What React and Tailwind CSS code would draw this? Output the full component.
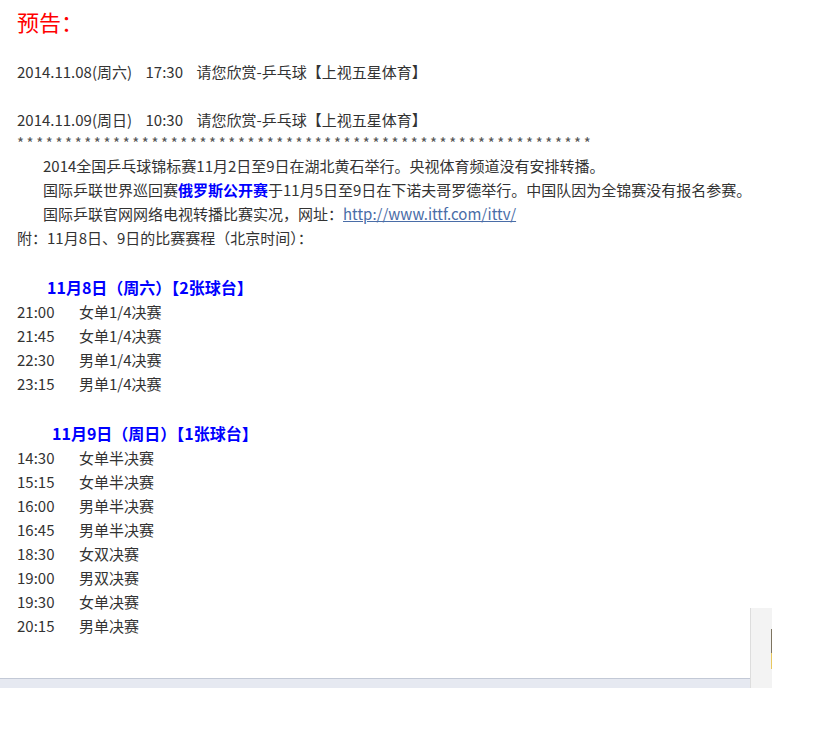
export default function App() {
  const day1 = [
    ["21:00", "女单1/4决赛"],
    ["21:45", "女单1/4决赛"],
    ["22:30", "男单1/4决赛"],
    ["23:15", "男单1/4决赛"],
  ];
  const day2 = [
    ["14:30", "女单半决赛"],
    ["15:15", "女单半决赛"],
    ["16:00", "男单半决赛"],
    ["16:45", "男单半决赛"],
    ["18:30", "女双决赛"],
    ["19:00", "男双决赛"],
    ["19:30", "女单决赛"],
    ["20:15", "男单决赛"],
  ];
  const font = { fontFamily: '"Noto Sans CJK SC", sans-serif' };
  return (
    <div className="relative w-[820px] h-[751px] bg-white overflow-hidden text-[15px] leading-[24px] text-[#333]" style={font}>
      <div className="w-[756px] pl-[17px] pt-[6px]">
        <div className="text-[22px] leading-[30px] text-[#ff0000]">预告：</div>
        <div className="h-[24px]" />
        <div className="whitespace-pre">2014.11.08(周六)    17:30    请您欣赏-乒乓球【上视五星体育】</div>
        <div className="h-[24px]" />
        <div className="whitespace-pre">2014.11.09(周日)    10:30    请您欣赏-乒乓球【上视五星体育】</div>
        <div className="leading-[22px] text-[#555] tracking-[2.6px] whitespace-pre">{"*".repeat(60)}</div>
        <p className="indent-[26px]">2014全国乒乓球锦标赛11月2日至9日在湖北黄石举行。央视体育频道没有安排转播。</p>
        <p className="indent-[26px]">国际乒联世界巡回赛<b className="text-[#0000ff]">俄罗斯公开赛</b>于11月5日至9日在下诺夫哥罗德举行。中国队因为全锦赛没有报名参赛。</p>
        <p className="indent-[26px]">国际乒联官网网络电视转播比赛实况，网址：<a className="underline text-[#4a6da7]">http://www.ittf.com/ittv/</a></p>
        <p>附：11月8日、9日的比赛赛程（北京时间）：</p>
        <div className="h-[24px]" />
        <div className="pl-[30px] font-bold text-[16px] leading-[26px] text-[#0000ff]">11月8日（周六）【2张球台】</div>
        {day1.map(([t, e], i) => (
          <div key={i} className="flex gap-[17px]"><span className="w-[45px]">{t}</span><span>{e}</span></div>
        ))}
        <div className="h-[24px]" />
        <div className="pl-[35px] font-bold text-[16px] leading-[26px] text-[#0000ff]">11月9日（周日）【1张球台】</div>
        {day2.map(([t, e], i) => (
          <div key={i} className="flex gap-[17px]"><span className="w-[45px]">{t}</span><span>{e}</span></div>
        ))}
      </div>
      <div className="absolute left-0 top-[678px] w-[751px] h-[10px] border-t border-[#c3c9d6] bg-[#e6e9f1]" />
      <div className="absolute left-[750px] top-[608px] w-[22px] h-[80px] bg-[#f3f3f3] border-l border-[#ddd]">
        <div className="absolute right-0 top-[21px] w-[1px] h-[24px] bg-[#7d7460]" />
        <div className="absolute right-0 top-[45px] w-[1px] h-[16px] bg-[#e8c860]" />
      </div>
    </div>
  );
}
